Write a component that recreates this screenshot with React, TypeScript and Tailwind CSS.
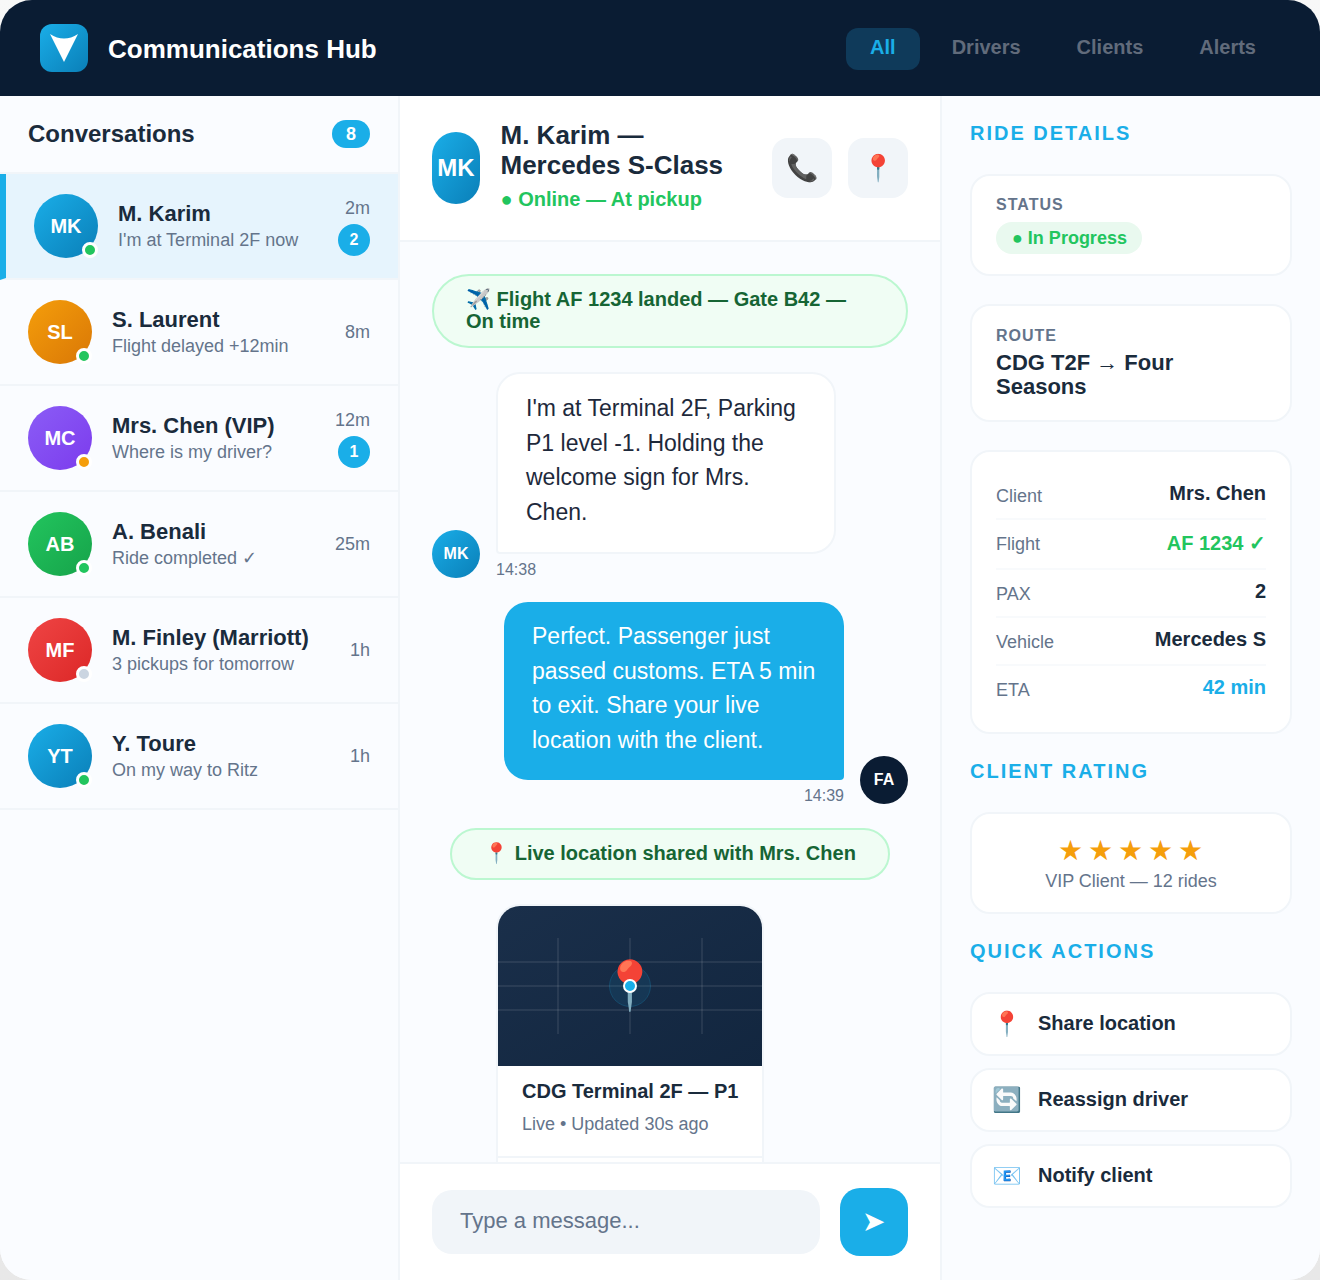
import React from 'react';

const grads: Record<string, string> = {
  blue: 'bg-gradient-to-br from-[#1aaee8] to-[#0a7fb8]',
  orange: 'bg-gradient-to-br from-[#f59e0b] to-[#d97706]',
  purple: 'bg-gradient-to-br from-[#8b5cf6] to-[#7c3aed]',
  green: 'bg-gradient-to-br from-[#22c55e] to-[#16a34a]',
  red: 'bg-gradient-to-br from-[#ef4444] to-[#dc2626]',
};

const conversations = [
  { initials: 'MK', name: 'M. Karim', preview: "I'm at Terminal 2F now", time: '2m', unread: 2, grad: 'blue', dot: 'bg-[#22c55e]', active: true },
  { initials: 'SL', name: 'S. Laurent', preview: 'Flight delayed +12min', time: '8m', grad: 'orange', dot: 'bg-[#22c55e]' },
  { initials: 'MC', name: 'Mrs. Chen (VIP)', preview: 'Where is my driver?', time: '12m', unread: 1, grad: 'purple', dot: 'bg-[#f59e0b]' },
  { initials: 'AB', name: 'A. Benali', preview: 'Ride completed ✓', time: '25m', grad: 'green', dot: 'bg-[#22c55e]' },
  { initials: 'MF', name: 'M. Finley (Marriott)', preview: '3 pickups for tomorrow', time: '1h', grad: 'red', dot: 'bg-[#cbd5e1]' },
  { initials: 'YT', name: 'Y. Toure', preview: 'On my way to Ritz', time: '1h', grad: 'blue', dot: 'bg-[#22c55e]' },
];

const details = [
  { label: 'Client', value: 'Mrs. Chen', color: 'text-[#1a2b3c] leading-[26px]', row: 'h-[48px] border-b-2' },
  { label: 'Flight', value: 'AF 1234 ✓', color: 'text-[#22c55e] leading-[30px]', row: 'h-[50px] border-b-2' },
  { label: 'PAX', value: '2', color: 'text-[#1a2b3c] leading-[26px]', row: 'h-[48px] border-b-2' },
  { label: 'Vehicle', value: 'Mercedes S', color: 'text-[#1a2b3c] leading-[26px]', row: 'h-[48px] border-b-2' },
  { label: 'ETA', value: '42 min', color: 'text-[#1aaee8] leading-[26px]', row: 'h-[48px]' },
];

const SectionTitle = ({ children }: { children: React.ReactNode }) => (
  <h3 className="text-[20px] leading-[23px] font-bold tracking-[2px] uppercase text-[#1aaee8]">{children}</h3>
);

const Card = ({ className, children }: { className: string; children: React.ReactNode }) => (
  <div className={`bg-white border-2 border-[#f1f5f9] rounded-[20px] ${className}`}>{children}</div>
);

const App = () => {
  return (
    <div className="w-[1320px] h-[1280px] bg-gradient-to-b from-[#f8f8f8] to-[#e8e8e8]" style={{ fontFamily: '"Liberation Sans", Arial, sans-serif' }}>
      <div className="w-full h-full rounded-[32px] overflow-hidden flex flex-col bg-[#fafcff]">
        {/* Header */}
        <header className="h-[96px] shrink-0 bg-[#0a1c33] flex items-center justify-between px-10">
          <div className="flex items-center gap-5">
            <div className="w-12 h-12 rounded-xl bg-gradient-to-br from-[#1aaee8] to-[#0a7fb8] flex items-center justify-center">
              <svg width="28" height="28" viewBox="0 0 28 28">
                <path d="M0 0 Q14 9 28 0 L14 28 Z" fill="#fff" />
              </svg>
            </div>
            <span className="mt-[2px] text-[26px] font-bold text-white">Communications Hub</span>
          </div>
          <nav className="mt-[2px] flex gap-2 text-[20px] leading-[22px] font-semibold">
            <span className="px-6 pt-2 pb-3 rounded-xl bg-[#0f3a5a] text-[#1aaee8]">All</span>
            <span className="px-6 pt-2 pb-3 text-[#616b7b]">Drivers</span>
            <span className="px-6 pt-2 pb-3 text-[#616b7b]">Clients</span>
            <span className="px-6 pt-2 pb-3 text-[#616b7b]">Alerts</span>
          </nav>
        </header>

        <div className="flex flex-1 min-h-0">
          {/* Conversations */}
          <aside className="w-[400px] shrink-0 border-r-2 border-[#f1f5f9] bg-[#fafcff]">
            <div className="h-[78px] px-7 flex items-center justify-between border-b-2 border-[#f1f5f9]">
              <h2 className="text-[24px] font-bold text-[#1a2b3c]">Conversations</h2>
              <span className="w-[38px] h-7 rounded-full bg-[#1aaee8] text-white text-[18px] font-bold flex items-center justify-center">8</span>
            </div>
            {conversations.map((c) => (
              <div
                key={c.name}
                className={`h-[106px] flex items-center gap-5 pl-7 pr-7 border-b-2 border-[#f1f5f9] ${c.active ? 'bg-[#e6f4fd] border-l-[6px] border-l-[#1aaee8]' : ''}`}
              >
                <div className={`relative w-16 h-16 shrink-0 rounded-full ${grads[c.grad]} flex items-center justify-center text-white text-[20px] font-bold`}>
                  {c.initials}
                  <span className={`absolute right-0 bottom-0 w-4 h-4 rounded-full border-[3px] border-white ${c.dot}`} />
                </div>
                <div className="flex-1 min-w-0">
                  <div className="text-[22px] leading-[26px] font-bold text-[#1a2b3c]">{c.name}</div>
                  <div className="mt-px text-[18px] leading-[24px] text-[#64748b]">{c.preview}</div>
                </div>
                <div className="flex flex-col items-end gap-1 text-[18px] leading-[24px] text-[#64748b]">
                  <span>{c.time}</span>
                  {c.unread && (
                    <span className="w-8 h-8 rounded-full bg-[#1aaee8] text-white text-[16px] font-bold flex items-center justify-center">{c.unread}</span>
                  )}
                </div>
              </div>
            ))}
          </aside>

          {/* Chat */}
          <main className="w-[542px] shrink-0 border-r-2 border-[#f1f5f9] flex flex-col bg-white">
            <div className="h-[146px] shrink-0 px-8 flex items-center gap-5 border-b-2 border-[#f1f5f9]">
              <div className="w-12 h-[72px] shrink-0 rounded-full bg-gradient-to-br from-[#1aaee8] to-[#0a7fb8] flex items-center justify-center text-white text-[24px] font-bold">MK</div>
              <div className="flex-1 min-w-0 pb-[5px] pl-[0.5px]">
                <div className="text-[26px] leading-[30px] font-bold text-[#1a2b3c]">M. Karim —<br />Mercedes S-Class</div>
                <div className="mt-2 text-[20px] leading-[23px] font-semibold text-[#22c55e]">● Online — At pickup</div>
              </div>
              <div className="flex gap-4 shrink-0">
                <button className="w-[60px] h-[60px] rounded-2xl bg-[#f1f5f9] text-[26px]">📞</button>
                <button className="w-[60px] h-[60px] rounded-2xl bg-[#f1f5f9] text-[26px]">📍</button>
              </div>
            </div>

            <div className="flex-1 min-h-0 overflow-hidden bg-[#fafcff] px-8 pt-8 flex flex-col gap-6">
              <div className="shrink-0 border-2 border-[#bbf7d0] bg-[#f0fdf4] rounded-[37px] px-8 pt-3 pb-[14px] text-[20px] leading-[22px] font-semibold text-[#166534]">
                ✈️ Flight AF 1234 landed — Gate B42 — On time
              </div>

              <div className="shrink-0 flex items-end gap-4">
                <div className="w-12 h-12 rounded-full bg-gradient-to-br from-[#1aaee8] to-[#0a7fb8] flex items-center justify-center text-white text-[16px] font-bold">MK</div>
                <div className="w-[340px]">
                  <div className="bg-white border-2 border-[#f1f5f9] rounded-3xl rounded-bl-[4px] px-7 pt-[17px] pb-[23px] text-[23px] leading-[34.5px] text-[#1e293b]">
                    I'm at Terminal 2F, Parking P1 level -1. Holding the welcome sign for Mrs. Chen.
                  </div>
                  <div className="mt-[7px] text-[16px] leading-[17px] text-[#64748b]">14:38</div>
                </div>
              </div>

              <div className="shrink-0 flex items-end justify-end gap-4">
                <div className="w-[340px]">
                  <div className="bg-[#1aaee8] rounded-3xl rounded-br-[4px] px-7 pt-[17px] pb-[23px] text-[23px] leading-[34.5px] text-white">
                    Perfect. Passenger just passed customs. ETA 5 min to exit. Share your live location with the client.
                  </div>
                  <div className="mt-[7px] text-[16px] leading-[17px] text-[#64748b] text-right">14:39</div>
                </div>
                <div className="w-12 h-12 rounded-full bg-[#0a1c33] flex items-center justify-center text-white text-[16px] font-bold">FA</div>
              </div>

              <div className="shrink-0 self-center border-2 border-[#bbf7d0] bg-[#f0fdf4] rounded-[26px] px-8 pt-3 pb-[14px] text-[20px] leading-[22px] font-semibold text-[#166534]">
                📍 Live location shared with Mrs. Chen
              </div>

              <div className="shrink-0 ml-16 w-[268px] border-2 border-[#f1f5f9] rounded-3xl overflow-hidden bg-white">
                <div className="relative h-40 bg-gradient-to-br from-[#1a2f4a] to-[#12263f]">
                  <svg className="absolute inset-0" width="264" height="160">
                    <g stroke="#fff" strokeOpacity="0.08" strokeWidth="2">
                      <path d="M0 56H264M0 80H264M0 104H264" />
                      <path d="M60 32V128M132 32V128M204 32V128" />
                    </g>
                    <circle cx="132" cy="80" r="20.5" fill="#1aaee8" fillOpacity="0.1" stroke="#1aaee8" strokeOpacity="0.2" />
                  </svg>
                  <span className="absolute left-0 right-0 top-[52px] text-center text-[48px] leading-[56px]">📍</span>
                  <span className="absolute left-[125px] top-[73px] w-[14px] h-[14px] rounded-full bg-[#1aaee8] border-2 border-white" />
                </div>
                <div className="px-6 pt-[14px] pb-[19px] border-b-2 border-[#f1f5f9]">
                  <div className="text-[20px] leading-[23px] font-bold text-[#1a2b3c] whitespace-nowrap">CDG Terminal 2F — P1</div>
                  <div className="mt-2 text-[18px] leading-[26px] text-[#64748b]">Live • Updated 30s ago</div>
                </div>
                <div className="h-10" />
              </div>
            </div>

            <div className="h-[118px] shrink-0 border-t-2 border-[#f1f5f9] bg-white px-8 flex items-center gap-5">
              <div className="flex-1 h-16 rounded-[20px] bg-[#f1f5f9] px-7 pb-1 flex items-center text-[22px] text-[#64748b]">Type a message...</div>
              <button className="w-[68px] h-[68px] rounded-[20px] bg-[#1aaee8] pr-[2px] text-white text-[28px]">➤</button>
            </div>
          </main>

          {/* Ride details */}
          <aside className="flex-1 min-w-0 bg-[#fafcff] px-7 pt-[26px]">
            <SectionTitle>Ride Details</SectionTitle>
            <Card className="mt-[29px] h-[102px] px-6 pt-[19px]">
              <div className="text-[16px] leading-[19px] font-semibold tracking-[1px] text-[#64748b]">STATUS</div>
              <span className="mt-2 inline-block rounded-full bg-[#e9f9ef] pl-4 pr-[15px] py-1 text-[18px] leading-6 font-semibold text-[#22c55e]">● In Progress</span>
            </Card>
            <Card className="mt-7 h-[118px] px-6 pt-5">
              <div className="text-[16px] leading-[19px] font-semibold tracking-[1px] text-[#64748b]">ROUTE</div>
              <div className="mt-[6px] text-[22px] leading-6 font-bold text-[#1a2b3c]">CDG T2F → Four Seasons</div>
            </Card>
            <Card className="mt-7 h-[284px] px-6 pt-5">
              {details.map((d) => (
                <div key={d.label} className={`flex justify-between pt-2 border-[#f8fafc] ${d.row}`}>
                  <span className="text-[18px] leading-[32px] text-[#64748b]">{d.label}</span>
                  <span className={`text-[20px] font-bold ${d.color}`}>{d.value}</span>
                </div>
              ))}
            </Card>
            <div className="mt-[26px]"><SectionTitle>Client Rating</SectionTitle></div>
            <Card className="mt-[29px] h-[102px] flex flex-col items-center pt-[19px]">
              <div className="pl-[3px] text-[28px] leading-[36px] tracking-[5px] text-[#f59e0b]">★★★★★</div>
              <div className="text-[18px] leading-[25px] text-[#64748b]">VIP Client — 12 rides</div>
            </Card>
            <div className="mt-[26px]"><SectionTitle>Quick Actions</SectionTitle></div>
            <div className="mt-[29px] flex flex-col gap-3">
              {[['📍', 'Share location'], ['🔄', 'Reassign driver'], ['📧', 'Notify client']].map(([icon, label]) => (
                <Card key={label} className="h-16 px-5 flex items-center gap-4">
                  <span className="w-[30px] text-center text-[24px]">{icon}</span>
                  <span className="pb-[2px] text-[20px] font-semibold text-[#1a2b3c]">{label}</span>
                </Card>
              ))}
            </div>
          </aside>
        </div>
      </div>
    </div>
  );
};

export default App;
